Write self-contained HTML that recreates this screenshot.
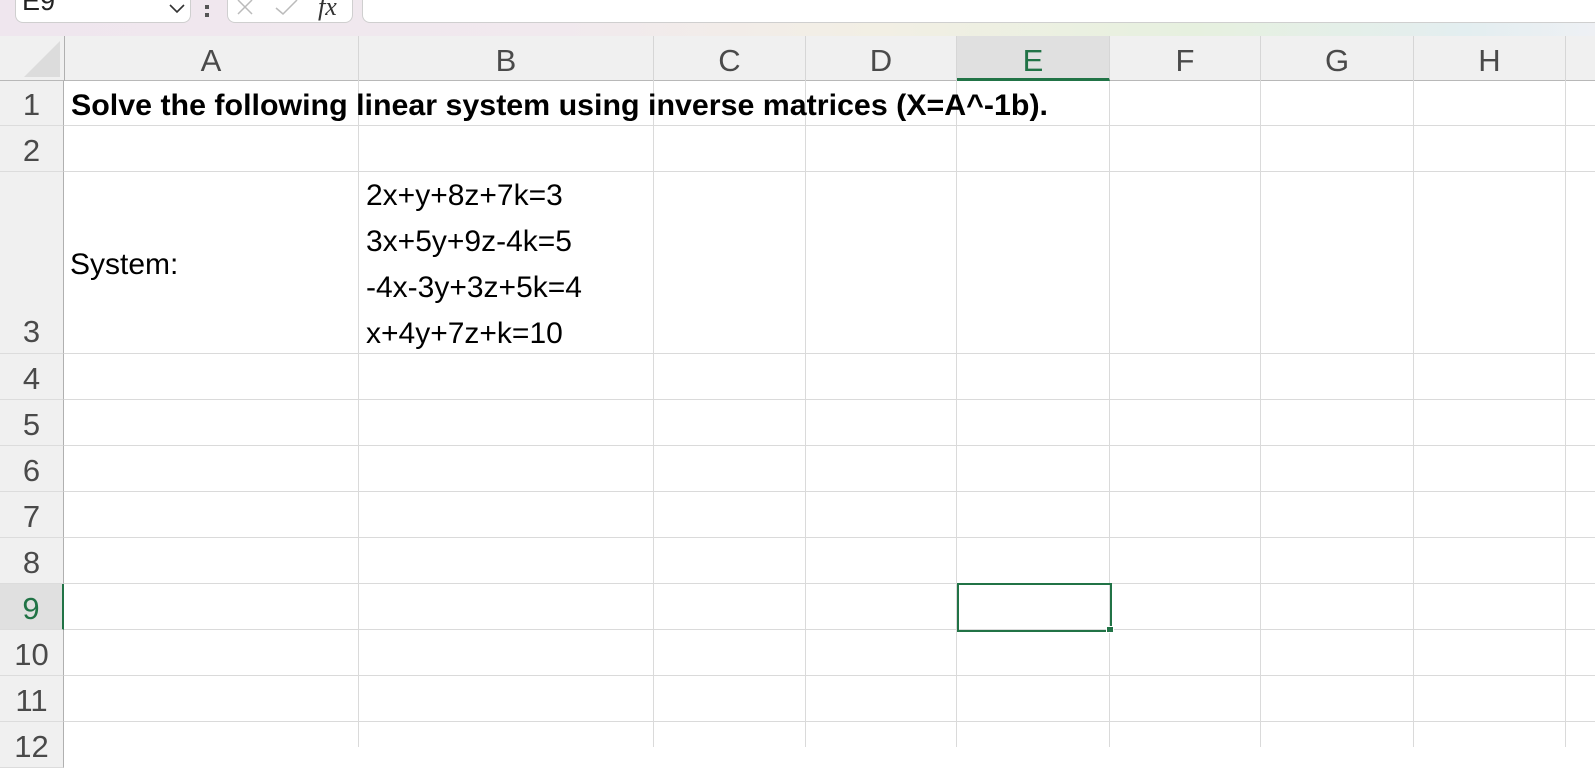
<!DOCTYPE html>
<html><head><meta charset="utf-8"><style>
*{margin:0;padding:0;box-sizing:border-box}
body{width:1595px;height:747px;overflow:hidden;background:#fff;position:relative;font-family:"Liberation Sans",sans-serif}
.a{position:absolute}
.band{left:0;top:0;width:1595px;height:36px;background:linear-gradient(90deg,#efe6ee 0%,#f1e9ee 35%,#f2efe4 55%,#e6f0df 75%,#e3eef0 92%,#eef0f4 100%)}
.box{background:#fff;border:1px solid #cfcfcf;border-top:none;border-radius:0 0 8px 8px}
.hdr{top:36px;height:45px;background:#f0f0f0;border-bottom:1px solid #b8b8b8}
.ch{top:36px;height:45px;color:#4a4a4a;font-size:31px;text-align:center;line-height:50px;border-right:1px solid #d6d6d6}
.rh{left:0;width:64px;color:#4a4a4a;font-size:31px;text-align:center;background:#f0f0f0;border-right:1px solid #b0b0b0;border-bottom:1px solid #dcdcdc}
.vl{width:1px;background:#dadada;top:81px;height:666px}
.hl{height:1px;background:#dadada;left:64px;width:1531px}
.t{font-size:30px;color:#000;white-space:nowrap}
</style></head><body>
<div class="a band"></div>
<div class="a box" style="left:15px;top:-10px;width:176px;height:33px"></div>
<div class="a" style="left:22px;top:-14px;font-size:27px;color:#222">E9</div>
<svg class="a" style="left:168px;top:3px" width="18" height="12"><path d="M2 2 L9 9 L16 2" fill="none" stroke="#333" stroke-width="1.6"/></svg>
<div class="a" style="left:205px;top:5px;width:4px;height:4px;background:#555"></div>
<div class="a" style="left:205px;top:13px;width:4px;height:4px;background:#555"></div>
<div class="a box" style="left:227px;top:-10px;width:126px;height:33px"></div>
<svg class="a" style="left:236px;top:0" width="80" height="18"><path d="M2 0 L16 14 M16 0 L2 14" stroke="#bbb" stroke-width="1.5"/><path d="M40 8 L47 14 L61 0" fill="none" stroke="#bbb" stroke-width="1.5"/></svg>
<div class="a" style="left:318px;top:-8px;font-family:'Liberation Serif',serif;font-style:italic;font-size:26px;color:#333">fx</div>
<div class="a box" style="left:362px;top:-10px;width:1240px;height:33px"></div>

<div class="a hdr" style="left:0;width:1595px"></div>
<svg class="a" style="left:24px;top:41px" width="38" height="36"><polygon points="36,0 36,36 0,36" fill="#dcdcdc"/></svg>
<div class="a" style="left:64px;top:36px;width:1px;height:45px;background:#b0b0b0"></div>
<div class="a ch" style="left:64px;width:295px">A</div>
<div class="a ch" style="left:359px;width:295px">B</div>
<div class="a ch" style="left:654px;width:152px">C</div>
<div class="a ch" style="left:806px;width:151px">D</div>
<div class="a ch" style="left:957px;width:153px;background:#e0e0e0;color:#217346;border-bottom:3px solid #217346;height:45px">E</div>
<div class="a ch" style="left:1110px;width:151px">F</div>
<div class="a ch" style="left:1261px;width:153px">G</div>
<div class="a ch" style="left:1414px;width:152px">H</div>

<div class="a vl" style="left:358px"></div>
<div class="a vl" style="left:653px"></div>
<div class="a vl" style="left:805px"></div>
<div class="a vl" style="left:956px"></div>
<div class="a vl" style="left:1109px"></div>
<div class="a vl" style="left:1260px"></div>
<div class="a vl" style="left:1413px"></div>
<div class="a vl" style="left:1565px"></div>
<div class="a hl" style="top:125px"></div>
<div class="a hl" style="top:171px"></div>
<div class="a hl" style="top:353px"></div>
<div class="a hl" style="top:399px"></div>
<div class="a hl" style="top:445px"></div>
<div class="a hl" style="top:491px"></div>
<div class="a hl" style="top:537px"></div>
<div class="a hl" style="top:583px"></div>
<div class="a hl" style="top:629px"></div>
<div class="a hl" style="top:675px"></div>
<div class="a hl" style="top:721px"></div>

<div class="a rh" style="top:81px;height:45px;line-height:48px">1</div>
<div class="a rh" style="top:126px;height:46px;line-height:50px">2</div>
<div class="a rh" style="top:172px;height:182px;line-height:320px">3</div>
<div class="a rh" style="top:354px;height:46px;line-height:50px">4</div>
<div class="a rh" style="top:400px;height:46px;line-height:50px">5</div>
<div class="a rh" style="top:446px;height:46px;line-height:50px">6</div>
<div class="a rh" style="top:492px;height:46px;line-height:50px">7</div>
<div class="a rh" style="top:538px;height:46px;line-height:50px">8</div>
<div class="a rh" style="top:584px;height:46px;line-height:50px;background:#e0e0e0;color:#217346;border-right:2px solid #217346">9</div>
<div class="a rh" style="top:630px;height:46px;line-height:50px">10</div>
<div class="a rh" style="top:676px;height:46px;line-height:50px">11</div>
<div class="a rh" style="top:722px;height:46px;line-height:50px">12</div>

<svg class="a" style="left:0;top:81px" width="1100" height="45"><text x="71" y="34" font-family="Liberation Sans,sans-serif" font-weight="bold" font-size="30" textLength="977" lengthAdjust="spacingAndGlyphs" fill="#000">Solve the following linear system using inverse matrices (X=A^-1b).</text></svg>
<div class="a t" style="left:70px;top:248px">System:</div>
<div class="a t" style="left:366px;top:179px">2x+y+8z+7k=3</div>
<div class="a t" style="left:366px;top:225px">3x+5y+9z-4k=5</div>
<div class="a t" style="left:366px;top:271px">-4x-3y+3z+5k=4</div>
<div class="a t" style="left:366px;top:317px">x+4y+7z+k=10</div>

<div class="a" style="left:957px;top:583px;width:155px;height:49px;border:2px solid #217346"></div>
<div class="a" style="left:1106px;top:626px;width:8px;height:7px;background:#217346;border:1px solid #fff"></div>
</body></html>
